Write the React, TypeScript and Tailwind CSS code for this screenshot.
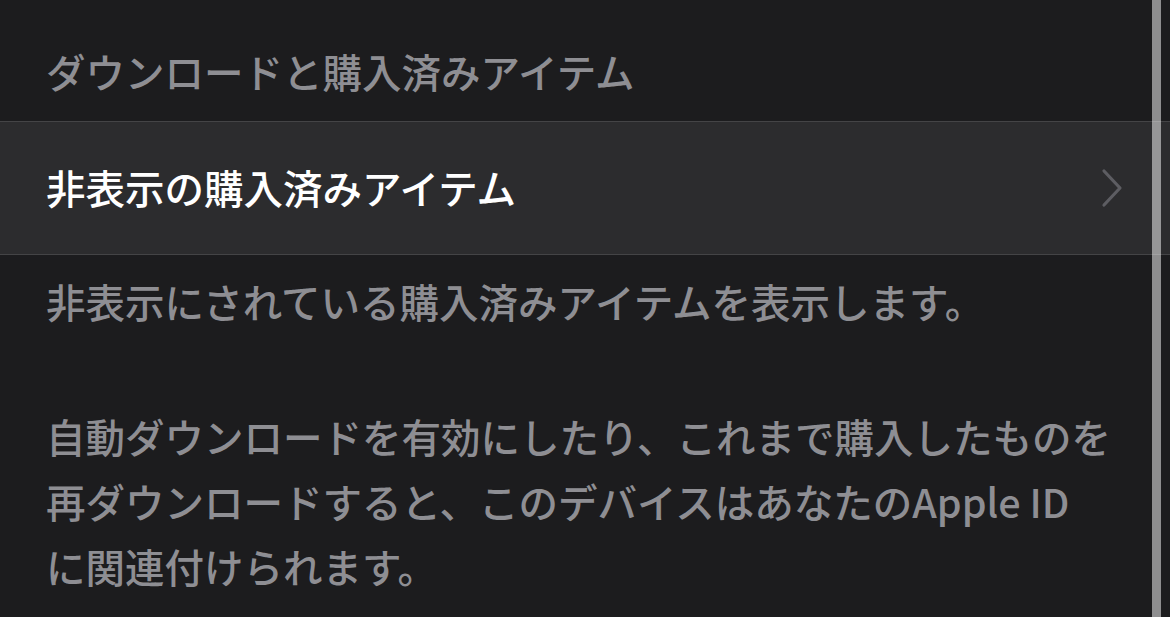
const font = { fontFamily: '"Noto Sans CJK JP", "Noto Sans", sans-serif' };

const Chevron = () => (
  <svg width="24" height="40" viewBox="0 0 24 40" fill="none" className="shrink-0">
    <polyline
      points="4,3 20,20 4,37"
      stroke="#5d5d62"
      strokeWidth="3.2"
      strokeLinecap="round"
      strokeLinejoin="round"
    />
  </svg>
);

export default function App() {
  return (
    <div className="relative h-[617px] w-full overflow-hidden bg-[#1c1c1e]" style={font}>
      <div className="h-[121px] px-[46px] pt-[42px] text-[39.5px] leading-[58px] font-medium text-[#8e8e93]">
        ダウンロードと購入済みアイテム
      </div>

      <div className="flex h-[134px] items-center justify-between border-y border-[#444446] bg-[#2c2c2e] pl-[46px] pr-[46px]">
        <span className="pb-[3px] text-[39.5px] leading-[58px] font-medium text-white">非表示の購入済みアイテム</span>
        <Chevron />
      </div>

      <div className="px-[46px] pt-[13px] text-[39.5px] leading-[65px] font-medium text-[#8e8e93]">
        <p>非表示にされている購入済みアイテムを表示します。</p>
        <p className="mt-[70px]">
          自動ダウンロードを有効にしたり、これまで購入したものを
          <br />
          再ダウンロードすると、このデバイスはあなたのApple ID
          <br />
          に関連付けられます。
        </p>
      </div>

      <div className="absolute top-0 bottom-0 right-[9px] w-[9px] bg-white/50" />
    </div>
  );
}
